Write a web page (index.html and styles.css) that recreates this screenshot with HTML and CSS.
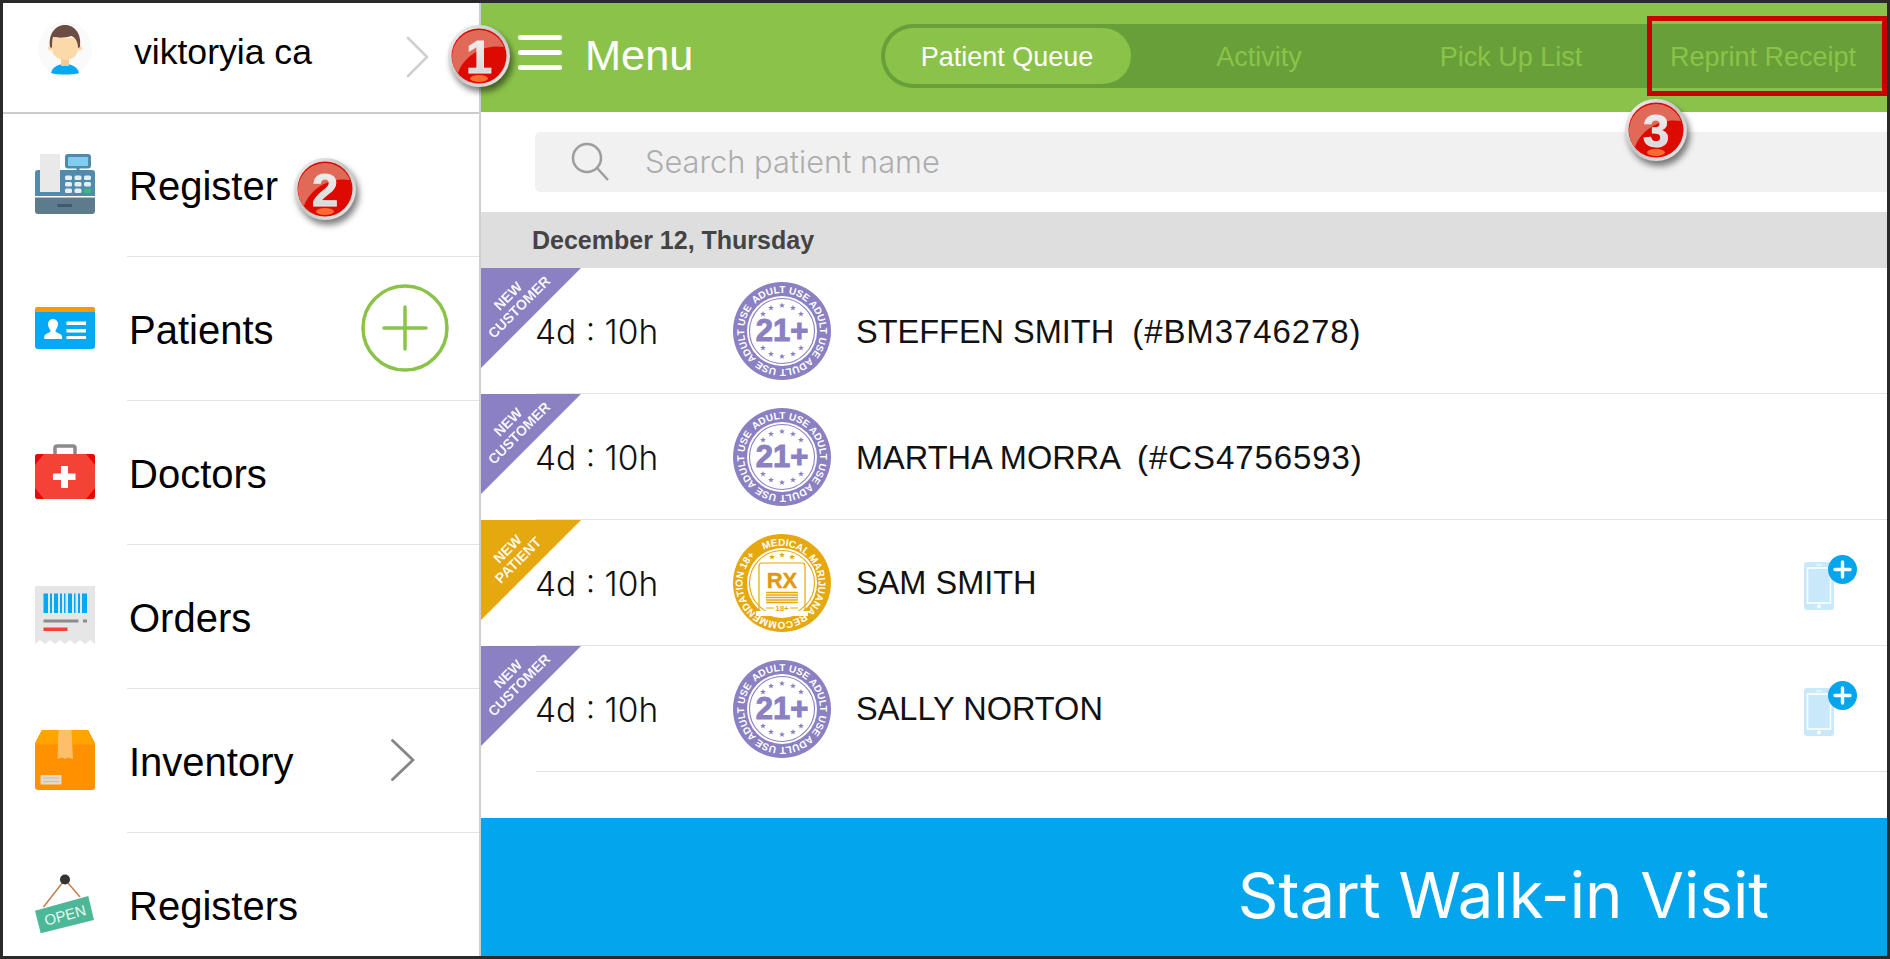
FILE: index.html
```html
<!DOCTYPE html>
<html lang="en">
<head>
<meta charset="utf-8">
<title>Patient Queue</title>
<link rel="stylesheet" href="styles.css">
</head>
<body>
<svg class="defs" aria-hidden="true">
  <defs>
    <polygon id="star" points="0,-3 .8,-1 2.9,-.9 1.3,.4 1.8,2.4 0,1.3 -1.8,2.4 -1.3,.4 -2.9,-.9 -.8,-1"/>
    <path id="ring-a" d="M23.13 23.13A38 38 0 0 1 76.87 76.87A38 38 0 0 1 23.13 23.13"/>
    <path id="ring-b" d="M31.6 16.8A38 38 0 1 1 31.5 16.85"/>
    <linearGradient id="silver" x1="0" y1="0" x2="1" y2="1">
      <stop offset="0" stop-color="#f6f6f6"/><stop offset=".5" stop-color="#c4c4c4"/><stop offset="1" stop-color="#eeeeee"/>
    </linearGradient>
    <linearGradient id="digit" x1="0" y1="0" x2="0" y2="1">
      <stop offset="0" stop-color="#f4f4f4"/><stop offset="1" stop-color="#d2d2d2"/>
    </linearGradient>
    <symbol id="ball" viewBox="0 0 64 64">
      <circle cx="32" cy="32" r="31" fill="url(#silver)"/>
      <circle cx="32" cy="32" r="27.500" fill="#dc0a00"/>
      <path d="M5 32A27 27 0 0 1 57 23C38 20 18 30 11 49C7 45 5 39 5 32Z" fill="#e07a66" opacity=".85"/>
      <ellipse cx="32" cy="54.500" rx="9" ry="3.500" fill="#ff6a30"/>
    </symbol>
    <symbol id="seal-21" viewBox="0 0 100 100">
      <circle cx="50" cy="50" r="49" fill="#8a80c2"/>
      <circle cx="50" cy="50" r="35" fill="#fff"/>
      <circle cx="50" cy="50" r="32.500" fill="none" stroke="#8a80c2" stroke-width="1.100"/>
      <text class="seal-ring"><textPath href="#ring-a">ADULT USE ADULT USE ADULT USE ADULT USE</textPath></text>
      <g fill="#8a80c2">
        <use href="#star" x="31" y="33"/><use href="#star" x="39" y="27"/><use href="#star" x="50" y="24.500"/><use href="#star" x="61" y="27"/><use href="#star" x="69" y="33"/>
        <use href="#star" x="31" y="67"/><use href="#star" x="39" y="73"/><use href="#star" x="50" y="75.500"/><use href="#star" x="61" y="73"/><use href="#star" x="69" y="67"/>
      </g>
      <text class="seal-21" x="50" y="60">21+</text>
    </symbol>
    <symbol id="phone-add" viewBox="0 -7 53 55">
      <rect x="0" y="0" width="30" height="48" rx="3" fill="#c9e9fa"/>
      <rect x="3.500" y="6" width="23" height="35" fill="#c9e9fa" stroke="#fff" stroke-width="1.500"/>
      <rect x="12" y="2.500" width="6" height="1" fill="#fff"/>
      <circle cx="15" cy="44.500" r="2" fill="#fff"/>
      <circle cx="38.500" cy="7.500" r="14.500" fill="#03a5ec"/>
      <path d="M31 7.500H46M38.500 0V15" stroke="#fff" stroke-width="3.400" stroke-linecap="round"/>
    </symbol>
  </defs>
</svg>

<div class="app">
  <aside class="sidebar">
    <div class="profile">
      <svg class="avatar" viewBox="0 0 54 54" aria-hidden="true">
        <circle cx="27" cy="27" r="27" fill="#fafafa"/>
        <path d="M13 51C14 45 21 42 27 42S40 45 41 51C36 53 18 53 13 51Z" fill="#03a9f4"/>
        <rect x="23" y="34" width="8" height="10" fill="#f4c992"/>
        <circle cx="12.500" cy="26" r="2.500" fill="#fcd9a8"/><circle cx="41.500" cy="26" r="2.500" fill="#fcd9a8"/>
        <path d="M14 16H40V27C40 34 33 38 27 38S14 34 14 27Z" fill="#fcd9a8"/>
        <path d="M12 25C10 10 19 3 27 3S44 10 42 25L40 26C40 19 37 15 33 14C28 16 20 16 15 15C14 18 14 22 14 26Z" fill="#6d4c41"/>
      </svg>
      <span class="profile-name">viktoryia ca</span>
      <svg class="chevron chevron-light" viewBox="0 0 23 42" aria-hidden="true"><path d="M2 2L21 21L2 40"/></svg>
    </div>

    <nav class="nav">
      <a class="nav-row">
        <svg class="nav-icon" viewBox="0 0 60 60" aria-hidden="true">
          <path d="M0 19a3 3 0 0 1 3-3H57a3 3 0 0 1 3 3V42H0Z" fill="#4f8bab"/>
          <path d="M0 43.500H60V57a3 3 0 0 1-3 3H3a3 3 0 0 1-3-3Z" fill="#5e7a8d"/>
          <rect x="22.500" y="50" width="14.500" height="3" fill="#3f5a6b"/>
          <rect x="5" y="0" width="20" height="38" fill="#e9e9e9"/>
          <rect x="41.500" y="12" width="3" height="6" fill="#4f8bab"/>
          <rect x="30" y="0" width="26" height="14.500" rx="3" fill="#4f8bab"/>
          <rect x="33" y="3" width="20" height="9" rx="1" fill="#7fcdf0"/>
          <g fill="#e6eef2">
            <rect x="30" y="21.500" width="7" height="4.500" rx="1.500"/><rect x="39.500" y="21.500" width="7" height="4.500" rx="1.500"/><rect x="49" y="21.500" width="7" height="4.500" rx="1.500"/>
            <rect x="30" y="28" width="7" height="4.500" rx="1.500"/><rect x="39.500" y="28" width="7" height="4.500" rx="1.500"/><rect x="49" y="28" width="7" height="4.500" rx="1.500"/>
            <rect x="30" y="34.500" width="7" height="4.500" rx="1.500"/><rect x="39.500" y="34.500" width="7" height="4.500" rx="1.500"/>
          </g>
          <rect x="49" y="34.500" width="7" height="4.500" rx="1.500" fill="#3cb878"/>
        </svg>
        <span class="nav-label">Register</span>
      </a>

      <a class="nav-row">
        <svg class="nav-icon" viewBox="0 0 60 60" aria-hidden="true">
          <rect x="0" y="9" width="60" height="42" rx="3" fill="#03a9f4"/>
          <path d="M0 14V12a3 3 0 0 1 3-3H57a3 3 0 0 1 3 3V14Z" fill="#ff9800"/>
          <path d="M18 21a5 5 0 0 1 5 5c0 3-2 5-2.500 7c0 2 6 2 6.500 5.500V41H9.300V38.500C10 35 15.500 35 15.500 33C15 31 13 29 13 26a5 5 0 0 1 5-5Z" fill="#fff"/>
          <path d="M31.500 23.500H51V27H31.500ZM31.500 31H51V34.500H31.500ZM31.500 38H51V41H31.500Z" fill="#fff"/>
        </svg>
        <span class="nav-label">Patients</span>
        <svg class="add-circle" viewBox="0 0 88 88" aria-hidden="true">
          <circle cx="44" cy="44" r="42"/>
          <path d="M23 44H65M44 23V65"/>
        </svg>
      </a>

      <a class="nav-row">
        <svg class="nav-icon" viewBox="0 0 60 60" aria-hidden="true">
          <path d="M20 14V6a2 2 0 0 1 2-2H38a2 2 0 0 1 2 2V14" fill="none" stroke="#8a8a8a" stroke-width="3.500"/>
          <rect x="0" y="12" width="60" height="45" rx="3" fill="#f44336"/>
          <path d="M0 15a3 3 0 0 1 3-3H9L0 23ZM60 15a3 3 0 0 0-3-3H51L60 23ZM0 54a3 3 0 0 0 3 3H9L0 46ZM60 54a3 3 0 0 1-3 3H51L60 46Z" fill="#e30c00"/>
          <path d="M26 24H33V31.500H40.500V38H33V46H26V38H18V31.500H26Z" fill="#fff"/>
        </svg>
        <span class="nav-label">Doctors</span>
      </a>

      <a class="nav-row">
        <svg class="nav-icon" viewBox="0 0 60 60" aria-hidden="true">
          <path d="M0 0H60V58L55 54L50 58L45 54L40 58L35 54L30 58L25 54L20 58L15 54L10 58L5 54L0 58Z" fill="#e6e6e6"/>
          <path d="M8.500 7.500H13V27H8.500ZM15 7.500H17V27H15ZM19 7.500H23V27H19ZM25 7.500H27V27H25ZM29 7.500H30.500V27H29ZM33 7.500H37V27H33ZM39 7.500H40.500V27H39ZM43 7.500H45V27H43ZM47 7.500H52V27H47Z" fill="#03a9f4"/>
          <rect x="8.500" y="33.500" width="35" height="3" fill="#8c8c8c"/>
          <rect x="48" y="33.500" width="4" height="3" fill="#8c8c8c"/>
          <rect x="8.500" y="41.500" width="24" height="3.500" fill="#f44336"/>
        </svg>
        <span class="nav-label">Orders</span>
      </a>

      <a class="nav-row">
        <svg class="nav-icon" viewBox="0 0 60 60" aria-hidden="true">
          <path d="M7 0H53L60 13V57a3 3 0 0 1-3 3H3a3 3 0 0 1-3-3V13Z" fill="#ff9000"/>
          <path d="M7 0H53L60 14.500H0Z" fill="#ffa400"/>
          <path d="M23.500 0H36.500L38 29L33 27.500L30 29L27 27.500L22.500 29Z" fill="#ffbe6a"/>
          <rect x="5.500" y="45" width="21" height="9.500" rx="1" fill="#e3d9c8"/>
          <path d="M8 48H24M8 51.500H24" stroke="#c8bfae" stroke-width="1"/>
        </svg>
        <span class="nav-label">Inventory</span>
        <svg class="chevron chevron-dark" viewBox="0 0 24 42" aria-hidden="true"><path d="M1.500 1.500L22 21L1.500 40.500"/></svg>
      </a>

      <a class="nav-row">
        <svg class="nav-icon" viewBox="0 0 60 60" aria-hidden="true">
          <path d="M30 5.500L8.500 33M30 5.500L45 23" fill="none" stroke="#c47f4e" stroke-width="1.500"/>
          <circle cx="30" cy="5.500" r="5" fill="#333"/>
          <path d="M0 36.700L53.300 22L59 46L5.700 59.300Z" fill="#4db898"/>
          <text class="open-sign" x="30" y="46.500" transform="rotate(-15 30 41)">OPEN</text>
        </svg>
        <span class="nav-label">Registers</span>
      </a>
    </nav>
  </aside>

  <main class="main">
    <header class="topbar">
      <svg class="hamburger" viewBox="0 0 44 35" aria-hidden="true"><path d="M2.500 2.500H41.500M2.500 17.500H41.500M2.500 32.500H41.500"/></svg>
      <span class="topbar-title">Menu</span>
      <div class="tabs">
        <span class="tab tab-active">Patient Queue</span>
        <span class="tab">Activity</span>
        <span class="tab">Pick Up List</span>
        <span class="tab">Reprint Receipt</span>
      </div>
    </header>

    <div class="search-wrap">
      <div class="search">
        <svg class="search-icon" viewBox="0 0 38 40" aria-hidden="true"><circle cx="16" cy="16" r="14"/><path d="M26 26L37 38"/></svg>
        <span class="search-text">Search patient name</span>
      </div>
    </div>

    <div class="date-band">December 12, Thursday</div>

    <section class="queue">
      <article class="row">
        <svg class="ribbon" viewBox="0 0 100 100"><polygon points="0,0 100,0 0,100" fill="#8a80c2"/><text x="27" y="33" transform="rotate(-45 27 28)">NEW</text><text x="38" y="44" transform="rotate(-45 38 39)">CUSTOMER</text></svg>
        <div class="row-inner">
          <span class="wait">4d : 10h</span>
          <svg class="seal" aria-hidden="true"><use href="#seal-21"/></svg>
          <span class="name">STEFFEN SMITH  <span class="name-id">(#BM3746278)</span></span>
        </div>
      </article>
      <article class="row">
        <svg class="ribbon" viewBox="0 0 100 100"><polygon points="0,0 100,0 0,100" fill="#8a80c2"/><text x="27" y="33" transform="rotate(-45 27 28)">NEW</text><text x="38" y="44" transform="rotate(-45 38 39)">CUSTOMER</text></svg>
        <div class="row-inner">
          <span class="wait">4d : 10h</span>
          <svg class="seal" aria-hidden="true"><use href="#seal-21"/></svg>
          <span class="name">MARTHA MORRA  <span class="name-id">(#CS4756593)</span></span>
        </div>
      </article>
      <article class="row">
        <svg class="ribbon" viewBox="0 0 100 100"><polygon points="0,0 100,0 0,100" fill="#e5a80e"/><text x="26.500" y="34" transform="rotate(-45 26.500 29)">NEW</text><text x="37" y="45" transform="rotate(-45 37 40)">PATIENT</text></svg>
        <div class="row-inner">
          <span class="wait">4d : 10h</span>
          <svg class="seal" viewBox="0 0 100 100" aria-hidden="true">
            <circle cx="50" cy="50" r="49" fill="#e5a80e"/>
            <circle cx="50" cy="50" r="35" fill="#fff"/>
            <circle cx="50" cy="50" r="32.500" fill="none" stroke="#e5a80e" stroke-width="1.100"/>
            <text class="seal-ring"><textPath href="#ring-b">MEDICAL MARIJUANA RECOMMENDATION 18+</textPath></text>
            <g fill="#e5a80e"><use href="#star" x="40" y="24"/><use href="#star" x="50" y="22"/><use href="#star" x="60" y="24"/></g>
            <path d="M27 79V33a3 3 0 0 1 3-3H70a3 3 0 0 1 3 3V79" fill="none" stroke="#e5a80e" stroke-width="1.200"/>
            <rect x="24" y="78" width="52" height="5" fill="#fff"/>
            <text class="seal-rx" x="50" y="54.500">RX</text>
            <path d="M34 59.500H66M34 62H66M34 64.500H66M34 67H66M34 69.500H66" stroke="#e5a80e" stroke-width="1.300"/>
            <path d="M34 75H42M58 75H66" stroke="#e5a80e" stroke-width="1"/>
            <text class="seal-18" x="50" y="77.800">18+</text>
          </svg>
          <span class="name">SAM SMITH</span>
          <svg class="phone-add" aria-hidden="true"><use href="#phone-add"/></svg>
        </div>
      </article>
      <article class="row">
        <svg class="ribbon" viewBox="0 0 100 100"><polygon points="0,0 100,0 0,100" fill="#8a80c2"/><text x="27" y="33" transform="rotate(-45 27 28)">NEW</text><text x="38" y="44" transform="rotate(-45 38 39)">CUSTOMER</text></svg>
        <div class="row-inner">
          <span class="wait">4d : 10h</span>
          <svg class="seal" aria-hidden="true"><use href="#seal-21"/></svg>
          <span class="name">SALLY NORTON</span>
          <svg class="phone-add" aria-hidden="true"><use href="#phone-add"/></svg>
        </div>
      </article>
    </section>

    <button class="cta" type="button">Start Walk-in Visit</button>
  </main>

  <div class="callout-box"></div>
  <svg class="ball ball-1" viewBox="0 0 64 64"><use href="#ball"/><text x="32" y="49">1</text></svg>
  <svg class="ball ball-2" viewBox="0 0 64 64"><use href="#ball"/><text x="32" y="49">2</text></svg>
  <svg class="ball ball-3" viewBox="0 0 64 64"><use href="#ball"/><text x="32" y="49">3</text></svg>
</div>
</body>
</html>
```

FILE: styles.css
```css
* { box-sizing: border-box; }

html, body { margin: 0; height: 100%; }

body {
  padding: 3px;
  background: #2a2a2a;
  font-family: "Liberation Sans", Arial, sans-serif;
  color: #000;
  overflow: hidden;
}

.defs { position: absolute; width: 0; height: 0; }

.app {
  position: relative;
  display: flex;
  height: 953px;
  width: 1884px;
  background: #fff;
  overflow: hidden;
}

/* Sidebar */
.sidebar {
  flex: 0 0 478px;
  height: 100%;
  overflow: hidden;
  border-right: 2px solid #cfcfcf;
  background: #fff;
}

.profile {
  display: flex;
  align-items: center;
  height: 111px;
  padding-left: 35px;
  border-bottom: 2px solid #cccccc;
}

.avatar { width: 54px; height: 54px; margin-right: 42px; flex: none; margin-top: -18px; }

.profile-name { font-size: 35.600px; flex: 1; margin-top: -10px; }

.chevron { fill: none; flex: none; }
.chevron path { fill: none; stroke-linecap: round; stroke-linejoin: round; }
.chevron-light { width: 23px; height: 42px; margin-right: 50px; margin-top: -2px; }
.chevron-light path { stroke: #d0d0d0; stroke-width: 2.500; }
.chevron-dark { width: 24px; height: 42px; margin-right: 64px; margin-top: -2px; }
.chevron-dark path { stroke: #858585; stroke-width: 2.800; }

.nav { margin-top: -1px; }

.nav-row {
  position: relative;
  display: flex;
  align-items: center;
  height: 144px;
  padding-left: 32px;
}

.nav-row::after {
  content: "";
  position: absolute;
  left: 124px;
  right: 0;
  bottom: 0;
  height: 1px;
  background: #e4e4e4;
}

.nav-icon { width: 60px; height: 60px; flex: none; margin-right: 34px; margin-top: -2px; }

.nav-label { font-size: 40px; flex: 1; margin-top: 2px; }

.add-circle { width: 88px; height: 88px; flex: none; margin-right: 30px; margin-top: -3px; }
.add-circle circle { fill: none; stroke: #8bc34a; stroke-width: 3.500; }
.add-circle path { fill: none; stroke: #8bc34a; stroke-width: 3.500; stroke-linecap: round; }

.open-sign { font-size: 15px; fill: #e9f7f2; text-anchor: middle; font-family: "Liberation Sans", sans-serif; }

/* Main */
.main {
  flex: 1;
  min-width: 0;
  display: flex;
  flex-direction: column;
  height: 100%;
}

.topbar {
  display: flex;
  align-items: center;
  height: 109px;
  flex: none;
  background: #8bc34a;
  padding-left: 37px;
}

.hamburger { width: 44px; height: 35px; flex: none; margin-right: 23px; margin-top: -10px; }
.hamburger path { fill: none; stroke: #fff; stroke-width: 5; stroke-linecap: round; }

.topbar-title { color: #fff; font-size: 43.300px; width: 296px; flex: none; margin-top: -4px; }

.tabs {
  flex: 1;
  display: grid;
  grid-template-columns: repeat(4, 252px);
  height: 64px;
  margin-top: -4px;
  background: #689f38;
  border-radius: 32px 0 0 32px;
  overflow: hidden;
}

.tab {
  display: flex;
  align-items: center;
  justify-content: center;
  padding-top: 4px;
  font-size: 27px;
  color: #8bc34a;
}

.tab-active {
  color: #fff;
  background: #8bc34a;
  border-radius: 28px;
  margin: 4px 2px 4px 4px;
  padding-top: 4px;
  padding-right: 2px;
}

.search-wrap { flex: none; padding: 20px 0 20px 54px; }

.search {
  display: flex;
  align-items: center;
  height: 60px;
  background: #f1f1f1;
  border-radius: 5px 0 0 5px;
  padding-left: 36px;
}

.search-icon { width: 38px; height: 40px; flex: none; margin-right: 36px; }
.search-icon circle, .search-icon path { fill: none; stroke: #9d9d9d; stroke-width: 2.500; }

.search-text { font-family: Inter, "Liberation Sans", sans-serif; font-weight: 300; font-size: 30.800px; margin-top: -2px; color: #adadad; }

.date-band {
  flex: none;
  height: 56px;
  display: flex;
  align-items: center;
  padding-left: 51px;
  background: #dedede;
  color: #444;
  font-size: 25px;
  font-weight: bold;
}

.queue { flex: 1; }

.row { position: relative; height: 126px; }

.ribbon {
  position: absolute;
  left: 0;
  top: 0;
  width: 100px;
  height: 100px;
}

.ribbon text {
  fill: #fff;
  font-size: 14.200px;
  font-weight: bold;
  text-anchor: middle;
  opacity: .92;
}

.row-inner {
  display: flex;
  align-items: center;
  height: 100%;
  margin-left: 55px;
  border-bottom: 1px solid #e3e3e3;
  padding-right: 30px;
}

.wait { width: 196px; flex: none; margin: 3px 0 0 -1px; padding-right: 0; font-family: Inter, "Liberation Sans", sans-serif; font-weight: 300; font-size: 33.500px; color: #111; }

.seal { width: 100px; height: 100px; flex: none; margin: 0 24px 0 1px; }
.seal-ring { font-size: 10px; font-weight: bold; fill: #fff; }
.seal-21 { font-size: 31px; font-weight: bold; fill: #8a80c2; text-anchor: middle; stroke: #8a80c2; stroke-width: 1; }
.seal-rx { font-size: 22px; font-weight: bold; fill: #e09a10; text-anchor: middle; stroke: #e09a10; stroke-width: .4; }
.seal-18 { font-size: 8px; font-weight: bold; fill: #e5a80e; text-anchor: middle; }

.name { font-size: 32.500px; color: #111; white-space: pre; flex: 1; margin-top: 2px; }
.name-id { font-size: 33px; letter-spacing: .9px; }

.phone-add { width: 53px; height: 55px; flex: none; }

.cta {
  flex: none;
  height: 138px;
  border: 0;
  background: #03a5ec;
  color: #fff;
  font: 400 63.400px Inter, "Liberation Sans", Arial, sans-serif;
  text-align: right;
  padding: 16px 118px 0 0;
}

/* Callouts lying over the UI */
.callout-box {
  position: absolute;
  left: 1644px;
  top: 13px;
  width: 240px;
  height: 80px;
  border: 5px solid #c80000;
}

.ball {
  position: absolute;
  width: 64px;
  height: 64px;
  overflow: visible;
  filter: drop-shadow(3px 5px 3px rgba(0, 0, 0, .5));
}

.ball text {
  font-family: "Liberation Sans", sans-serif;
  font-size: 47px;
  font-weight: bold;
  text-anchor: middle;
  fill: url(#digit);
  stroke: #e8e8e8;
  stroke-width: 1;
}

.ball-1 { left: 444px; top: 21px; }
.ball-2 { left: 290px; top: 154px; }
.ball-3 { left: 1621px; top: 95px; }
```
